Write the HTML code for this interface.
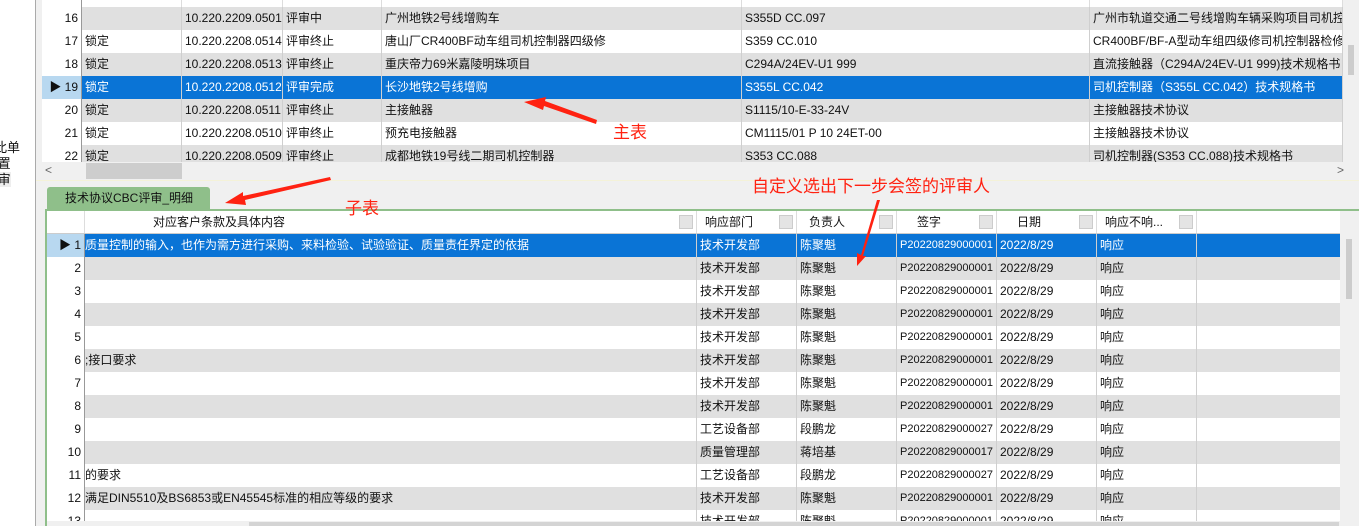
<!DOCTYPE html><html><head><meta charset="utf-8"><style>
*{margin:0;padding:0;box-sizing:border-box}
body{width:1359px;height:526px;overflow:hidden;background:#fff;position:relative;font-family:"Liberation Sans","Noto Sans CJK SC",sans-serif;font-size:12px;color:#111}
.a{position:absolute}
.r{position:absolute;height:23px;white-space:nowrap;overflow:hidden}
.r span{position:absolute;top:0;height:23px;line-height:23px;border-right:1px solid #cfcfcf;overflow:hidden;padding-left:3px}
.g{background:#e0e0e0}.w{background:#fff}.s{background:#0a74d6;color:#fff}
.hn{background:#fff !important;color:#111;text-align:right;padding-right:3px;border-right:1px solid #999 !important}
.s .hn{background:#b8d8f0 !important}
.red{position:absolute;color:#f21;font-size:17px;font-family:"Liberation Sans","Noto Sans CJK SC",sans-serif}
.hd span{background:#fff;border-right:1px solid #ddd}
.dd{position:absolute;right:3px;top:4px;width:14px;height:14px;background:#e4e4e4;border:1px solid #ccc}
</style></head><body>
<div class="a" style="left:-6px;top:140px;font-size:13px;line-height:16px">此单<br>&nbsp;置<br><span style="background:#eee">&nbsp;审</span></div>
<div class="a" style="left:35px;top:0;width:1px;height:526px;background:#aaa"></div>
<div class="a" style="left:36px;top:0;width:1323px;height:526px;background:#f0f0f0"></div>
<div class="a" style="left:42px;top:0;width:1301px;height:162px;background:#fff"></div>
<div class="r hd" style="left:42px;top:-16px;width:1301px"><span class="hn" style="left:0;width:40px"></span><span style="left:40px;width:100px"></span><span style="left:140px;width:101px"></span><span style="left:241px;width:99px"></span><span style="left:340px;width:360px"></span><span style="left:700px;width:348px"></span><span style="left:1048px;width:253px"></span></div>
<div class="r g" style="left:42px;top:7px;width:1301px"><span class="hn" style="left:0;width:40px">16</span><span style="left:40px;width:100px"></span><span style="left:140px;width:101px">10.220.2209.0501</span><span style="left:241px;width:99px">评审中</span><span style="left:340px;width:360px">广州地铁2号线增购车</span><span style="left:700px;width:348px">S355D CC.097</span><span style="left:1048px;width:253px">广州市轨道交通二号线增购车辆采购项目司机控</span></div>
<div class="r w" style="left:42px;top:30px;width:1301px"><span class="hn" style="left:0;width:40px">17</span><span style="left:40px;width:100px">锁定</span><span style="left:140px;width:101px">10.220.2208.0514</span><span style="left:241px;width:99px">评审终止</span><span style="left:340px;width:360px">唐山厂CR400BF动车组司机控制器四级修</span><span style="left:700px;width:348px">S359 CC.010</span><span style="left:1048px;width:253px">CR400BF/BF-A型动车组四级修司机控制器检修技</span></div>
<div class="r g" style="left:42px;top:53px;width:1301px"><span class="hn" style="left:0;width:40px">18</span><span style="left:40px;width:100px">锁定</span><span style="left:140px;width:101px">10.220.2208.0513</span><span style="left:241px;width:99px">评审终止</span><span style="left:340px;width:360px">重庆帝力69米嘉陵明珠项目</span><span style="left:700px;width:348px">C294A/24EV-U1 999</span><span style="left:1048px;width:253px">直流接触器（C294A/24EV-U1 999)技术规格书</span></div>
<div class="r s" style="left:42px;top:76px;width:1301px"><span class="hn" style="left:0;width:40px">▶ 19</span><span style="left:40px;width:100px">锁定</span><span style="left:140px;width:101px">10.220.2208.0512</span><span style="left:241px;width:99px">评审完成</span><span style="left:340px;width:360px">长沙地铁2号线增购</span><span style="left:700px;width:348px">S355L CC.042</span><span style="left:1048px;width:253px">司机控制器（S355L CC.042）技术规格书</span></div>
<div class="r g" style="left:42px;top:99px;width:1301px"><span class="hn" style="left:0;width:40px">20</span><span style="left:40px;width:100px">锁定</span><span style="left:140px;width:101px">10.220.2208.0511</span><span style="left:241px;width:99px">评审终止</span><span style="left:340px;width:360px">主接触器</span><span style="left:700px;width:348px">S1115/10-E-33-24V</span><span style="left:1048px;width:253px">主接触器技术协议</span></div>
<div class="r w" style="left:42px;top:122px;width:1301px"><span class="hn" style="left:0;width:40px">21</span><span style="left:40px;width:100px">锁定</span><span style="left:140px;width:101px">10.220.2208.0510</span><span style="left:241px;width:99px">评审终止</span><span style="left:340px;width:360px">预充电接触器</span><span style="left:700px;width:348px">CM1115/01 P 10 24ET-00</span><span style="left:1048px;width:253px">主接触器技术协议</span></div>
<div class="r g" style="left:42px;top:145px;width:1301px;height:17px"><span class="hn" style="left:0;width:40px">22</span><span style="left:40px;width:100px">锁定</span><span style="left:140px;width:101px">10.220.2208.0509</span><span style="left:241px;width:99px">评审终止</span><span style="left:340px;width:360px">成都地铁19号线二期司机控制器</span><span style="left:700px;width:348px">S353 CC.088</span><span style="left:1048px;width:253px">司机控制器(S353 CC.088)技术规格书</span></div>
<div class="a" style="left:42px;top:162px;width:1317px;height:18px;background:#f0f0f0"><span class="a" style="left:3px;top:1px;color:#666">&lt;</span><div class="a" style="left:44px;top:1px;width:96px;height:16px;background:#cdcdcd"></div><span class="a" style="left:1295px;top:1px;color:#666">&gt;</span></div>
<div class="a" style="left:1343px;top:0;width:16px;height:162px;background:#f0f0f0"><div class="a" style="left:5px;top:45px;width:6px;height:30px;background:#ccc"></div></div>
<div class="a" style="left:36px;top:180px;width:1323px;height:1px;background:#f4f2d8"></div>
<div class="a" style="left:47px;top:187px;width:163px;height:23px;background:#8fbf8a;border-radius:3px 3px 0 0;line-height:22px;padding-left:18px;font-size:12px">技术协议CBC评审_明细</div>
<div class="a" style="left:45px;top:209px;width:1314px;height:2px;background:#8fbf8a"></div>
<div class="a" style="left:45px;top:209px;width:2px;height:317px;background:#8fbf8a"></div>
<div class="a" style="left:47px;top:211px;width:1293px;height:310px;background:#fff"></div>
<div class="r hd" style="left:47px;top:211px;width:1293px;border-bottom:1px solid #ccc"><span style="left:0;width:38px;border-right:1px solid #ddd"></span><span style="left:38px;width:612px;text-align:left;padding-left:68px">对应客户条款及具体内容<i class="dd"></i></span><span style="left:650px;width:100px;padding-left:8px">响应部门<i class="dd"></i></span><span style="left:750px;width:100px;padding-left:12px">负责人<i class="dd"></i></span><span style="left:850px;width:100px;padding-left:20px">签字<i class="dd"></i></span><span style="left:950px;width:100px;padding-left:20px">日期<i class="dd"></i></span><span style="left:1050px;width:100px;padding-left:8px">响应不响...<i class="dd"></i></span></div>
<div class="r s" style="left:47px;top:234px;width:1293px"><span class="hn" style="left:0;width:38px">▶ 1</span><span style="left:38px;width:612px;padding-left:0">质量控制的输入，也作为需方进行采购、来料检验、试验验证、质量责任界定的依据</span><span style="left:650px;width:100px">技术开发部</span><span style="left:750px;width:100px">陈聚魁</span><span style="left:850px;width:100px;font-size:11px">P20220829000001</span><span style="left:950px;width:100px">2022/8/29</span><span style="left:1050px;width:100px">响应</span><span style="left:1150px;width:143px;border:0"></span></div>
<div class="r g" style="left:47px;top:257px;width:1293px"><span class="hn" style="left:0;width:38px">2</span><span style="left:38px;width:612px"></span><span style="left:650px;width:100px">技术开发部</span><span style="left:750px;width:100px">陈聚魁</span><span style="left:850px;width:100px;font-size:11px">P20220829000001</span><span style="left:950px;width:100px">2022/8/29</span><span style="left:1050px;width:100px">响应</span></div>
<div class="r w" style="left:47px;top:280px;width:1293px"><span class="hn" style="left:0;width:38px">3</span><span style="left:38px;width:612px"></span><span style="left:650px;width:100px">技术开发部</span><span style="left:750px;width:100px">陈聚魁</span><span style="left:850px;width:100px;font-size:11px">P20220829000001</span><span style="left:950px;width:100px">2022/8/29</span><span style="left:1050px;width:100px">响应</span></div>
<div class="r g" style="left:47px;top:303px;width:1293px"><span class="hn" style="left:0;width:38px">4</span><span style="left:38px;width:612px"></span><span style="left:650px;width:100px">技术开发部</span><span style="left:750px;width:100px">陈聚魁</span><span style="left:850px;width:100px;font-size:11px">P20220829000001</span><span style="left:950px;width:100px">2022/8/29</span><span style="left:1050px;width:100px">响应</span></div>
<div class="r w" style="left:47px;top:326px;width:1293px"><span class="hn" style="left:0;width:38px">5</span><span style="left:38px;width:612px"></span><span style="left:650px;width:100px">技术开发部</span><span style="left:750px;width:100px">陈聚魁</span><span style="left:850px;width:100px;font-size:11px">P20220829000001</span><span style="left:950px;width:100px">2022/8/29</span><span style="left:1050px;width:100px">响应</span></div>
<div class="r g" style="left:47px;top:349px;width:1293px"><span class="hn" style="left:0;width:38px">6</span><span style="left:38px;width:612px;padding-left:0">;接口要求</span><span style="left:650px;width:100px">技术开发部</span><span style="left:750px;width:100px">陈聚魁</span><span style="left:850px;width:100px;font-size:11px">P20220829000001</span><span style="left:950px;width:100px">2022/8/29</span><span style="left:1050px;width:100px">响应</span></div>
<div class="r w" style="left:47px;top:372px;width:1293px"><span class="hn" style="left:0;width:38px">7</span><span style="left:38px;width:612px"></span><span style="left:650px;width:100px">技术开发部</span><span style="left:750px;width:100px">陈聚魁</span><span style="left:850px;width:100px;font-size:11px">P20220829000001</span><span style="left:950px;width:100px">2022/8/29</span><span style="left:1050px;width:100px">响应</span></div>
<div class="r g" style="left:47px;top:395px;width:1293px"><span class="hn" style="left:0;width:38px">8</span><span style="left:38px;width:612px"></span><span style="left:650px;width:100px">技术开发部</span><span style="left:750px;width:100px">陈聚魁</span><span style="left:850px;width:100px;font-size:11px">P20220829000001</span><span style="left:950px;width:100px">2022/8/29</span><span style="left:1050px;width:100px">响应</span></div>
<div class="r w" style="left:47px;top:418px;width:1293px"><span class="hn" style="left:0;width:38px">9</span><span style="left:38px;width:612px"></span><span style="left:650px;width:100px">工艺设备部</span><span style="left:750px;width:100px">段鹏龙</span><span style="left:850px;width:100px;font-size:11px">P20220829000027</span><span style="left:950px;width:100px">2022/8/29</span><span style="left:1050px;width:100px">响应</span></div>
<div class="r g" style="left:47px;top:441px;width:1293px"><span class="hn" style="left:0;width:38px">10</span><span style="left:38px;width:612px"></span><span style="left:650px;width:100px">质量管理部</span><span style="left:750px;width:100px">蒋培基</span><span style="left:850px;width:100px;font-size:11px">P20220829000017</span><span style="left:950px;width:100px">2022/8/29</span><span style="left:1050px;width:100px">响应</span></div>
<div class="r w" style="left:47px;top:464px;width:1293px"><span class="hn" style="left:0;width:38px">11</span><span style="left:38px;width:612px;padding-left:0">的要求</span><span style="left:650px;width:100px">工艺设备部</span><span style="left:750px;width:100px">段鹏龙</span><span style="left:850px;width:100px;font-size:11px">P20220829000027</span><span style="left:950px;width:100px">2022/8/29</span><span style="left:1050px;width:100px">响应</span></div>
<div class="r g" style="left:47px;top:487px;width:1293px"><span class="hn" style="left:0;width:38px">12</span><span style="left:38px;width:612px;padding-left:0">满足DIN5510及BS6853或EN45545标准的相应等级的要求</span><span style="left:650px;width:100px">技术开发部</span><span style="left:750px;width:100px">陈聚魁</span><span style="left:850px;width:100px;font-size:11px">P20220829000001</span><span style="left:950px;width:100px">2022/8/29</span><span style="left:1050px;width:100px">响应</span></div>
<div class="r w" style="left:47px;top:510px;width:1293px;height:11px"><span class="hn" style="left:0;width:38px">13</span><span style="left:38px;width:612px"></span><span style="left:650px;width:100px">技术开发部</span><span style="left:750px;width:100px">陈聚魁</span><span style="left:850px;width:100px;font-size:11px">P20220829000001</span><span style="left:950px;width:100px">2022/8/29</span><span style="left:1050px;width:100px">响应</span></div>
<div class="a" style="left:47px;top:521px;width:1312px;height:5px;background:#f0f0f0"><div class="a" style="left:202px;top:1px;width:1090px;height:4px;background:#d4d4d4"></div></div>
<div class="a" style="left:1340px;top:211px;width:19px;height:310px;background:#f0f0f0"><div class="a" style="left:6px;top:28px;width:6px;height:60px;background:#ccc"></div></div>
<svg class="a" style="left:0;top:0" width="1359" height="526"><g fill="#f21">
<polygon points="524,102 546,97 545,101 597,120 596,124 544,106 543,110"/>
<polygon points="225,203 243,192 243,196 330,177 331,180 245,200 246,205"/>
<polygon points="880,200 877,200 861,255 857,253 857,266 866,256 863,256"/>
</g></svg>
<div class="red" style="left:613px;top:118px">主表</div>
<div class="red" style="left:345px;top:194px">子表</div>
<div class="red" style="left:752px;top:172px">自定义选出下一步会签的评审人</div>
</body></html>
